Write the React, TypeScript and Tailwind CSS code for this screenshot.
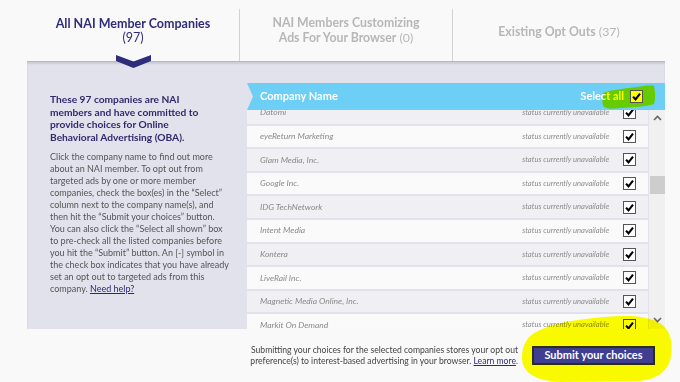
import React from "react";

const rows = [
  "Datomi",
  "eyeReturn Marketing",
  "Glam Media, Inc.",
  "Google Inc.",
  "IDG TechNetwork",
  "Intent Media",
  "Kontera",
  "LiveRail Inc.",
  "Magnetic Media Online, Inc.",
  "Markit On Demand",
];

const bodyLines = [
  "Click the company name to find out more",
  "about an NAI member. To opt out from",
  "targeted ads by one or more member",
  "companies, check the box(es) in the \u201cSelect\u201d",
  "column next to the company name(s), and",
  "then hit the \u201cSubmit your choices\u201d button.",
  "You can also click the \u201cSelect all shown\u201d box",
  "to pre-check all the listed companies before",
  "you hit the \u201cSubmit\u201d button. An [-] symbol in",
  "the check box indicates that you have already",
  "set an opt out to targeted ads from this",
];

function Check({ yellow = false }: { yellow?: boolean }) {
  return (
    <div
      className={`w-[13px] h-[13px] border border-[#555] flex items-center justify-center ${
        yellow ? "bg-[#ffff00]" : "bg-white"
      }`}
    >
      <svg width="11" height="11" viewBox="0 0 11 11">
        <path d="M2 5.6 L4.5 8.3 L9 2.6" fill="none" stroke="#000" strokeWidth="2.1" />
      </svg>
    </div>
  );
}

export default function App() {
  return (
    <div className="w-[680px] h-[382px] bg-[#f9f9f9] relative overflow-hidden font-[Lato,sans-serif]">
      {/* Tabs */}
      <div className="ml-[27px] w-[638px] h-[62px] flex border-b border-[#b8b8b8] relative">
        <div className="w-[212px] flex flex-col items-center pt-[17px] text-[12.5px] leading-[14px] text-[#2f2c7a]">
          <span className="font-bold">All NAI Member Companies</span>
          <span>(97)</span>
        </div>
        <div className="w-px bg-[#d2d2d2] mt-[9px]" />
        <div className="w-[212px] flex flex-col items-center pt-[15px] text-[12.3px] leading-[15px] text-[#b7b7b7]">
          <span className="font-bold">NAI Members Customizing</span>
          <span>
            <span className="font-bold">Ads For Your Browser</span> (0)
          </span>
        </div>
        <div className="w-px bg-[#d2d2d2] mt-[9px]" />
        <div className="flex-1 flex flex-col items-center pt-[25px] text-[12.3px] leading-[14px] text-[#b7b7b7]">
          <span>
            <span className="font-bold">Existing Opt Outs</span> (37)
          </span>
        </div>
      </div>

      {/* Main panel */}
      <div className="ml-[27px] w-[638px] h-[267px] bg-[#e2e2ed] flex shadow-[inset_0_2px_2px_rgba(0,0,0,0.10)]">
        <div className="w-[220px] shrink-0 pl-[23px] pt-[31px]">
          <div className="text-[10.2px] leading-[12.5px] font-bold text-[#2f2a6b] whitespace-nowrap">
            These 97 companies are NAI
            <br />
            members and have committed to
            <br />
            provide choices for Online
            <br />
            Behavioral Advertising (OBA).
          </div>
          <div className="mt-[8px] text-[9px] leading-[12px] text-[#555] whitespace-nowrap">
            {bodyLines.map((l) => (
              <div key={l}>{l}</div>
            ))}
            <div>
              company. <span className="text-[#2b2a78] underline">Need help?</span>
            </div>
          </div>
        </div>

        <div className="w-[418px] pt-[21px] flex flex-col">
          {/* header */}
          <div className="h-[27px] bg-[#6dcff5] relative flex items-center pl-[13px] pr-[22px] z-10">
            <svg className="absolute left-0 top-0" width="7" height="27" viewBox="0 0 7 27">
              <path d="M0 0 L6 13.5 L0 27 Z" fill="#e2e2ed" />
            </svg>
            <svg className="absolute left-[355px] top-[1px]" width="54" height="26" viewBox="0 0 54 26">
              <path
                d="M1 9 C8 6 20 5 34 3 C42 2 48 1 52 2 C53 8 54 14 52 20 C44 23 30 23 18 24 C10 25 4 25 1 22 C0 17 0 12 1 9 Z"
                fill="#66cc00"
              />
            </svg>
            <span className="relative text-white font-bold text-[11px]">Company Name</span>
            <span className="relative ml-auto text-[11px] font-bold text-white mr-[6px]">
              Selec<span className="text-[#ffff00]">t all</span>
            </span>
            <div className="relative">
              <Check yellow />
            </div>
          </div>
          {/* body */}
          <div className="h-[219px] flex gap-[1px]">
            <div className="w-[402px] overflow-hidden">
              <div className="-mt-[8px] flex flex-col gap-[2px]">
                {rows.map((r, i) => (
                  <div
                    key={r}
                    className={`h-[21.6px] shrink-0 flex items-center pl-[13px] pr-[12px] ${
                      i % 2 === 0 ? "bg-[#efeff4]" : "bg-[#fafafa]"
                    }`}
                  >
                    <span className="italic text-[8.5px] text-[#8a8a8a]">{r}</span>
                    <span className="ml-auto italic text-[7.6px] text-[#8d8d8d] mr-[14px]">
                      status currently unavailable
                    </span>
                    <Check />
                  </div>
                ))}
              </div>
            </div>
            <div className="w-[16px] bg-[#f0f0f0] relative flex flex-col items-center">
              <svg className="mt-[5px]" width="9" height="6" viewBox="0 0 9 6">
                <path d="M1 5 L4.5 1.5 L8 5" fill="none" stroke="#666" strokeWidth="1.6" />
              </svg>
              <div className="mt-[55px] w-[15px] h-[18px] bg-[#cdcdcd]" />
              <svg className="mt-auto mb-[6px]" width="9" height="6" viewBox="0 0 9 6">
                <path d="M1 1 L4.5 4.5 L8 1" fill="none" stroke="#666" strokeWidth="1.6" />
              </svg>
            </div>
          </div>
        </div>
      </div>

      {/* Bottom */}
      <div className="h-[53px] flex items-center justify-end pr-[25px] gap-[14px]">
        <div className="text-right text-[8.6px] leading-[11px] text-[#444] whitespace-nowrap">
          Submitting your choices for the selected companies stores your opt out
          <br />
          preference(s) to interest-based advertising in your browser.{" "}
          <span className="underline text-[#2b2a78]">Learn more</span>.
        </div>
        <div className="relative z-10 w-[123px] h-[19px] bg-[#403e90] border-2 border-[#2d2d14] flex items-center justify-center text-white font-bold text-[11px]">
          Submit your choices
        </div>
      </div>

      {/* Tab chevron */}
      <svg className="absolute left-[116px] top-[55px]" width="36" height="14" viewBox="0 0 36 14">
        <path d="M0 0 L17.5 6.5 L35 0 L35 6 L17.5 13 L0 6 Z" fill="#2e2d7c" />
      </svg>

      {/* Yellow highlight */}
      <svg
        className="absolute left-0 top-0 pointer-events-none mix-blend-multiply"
        width="680"
        height="382"
        viewBox="0 0 680 382"
      >
        <path
          d="M527 340 C535 326 575 318 620 316 C650 315 668 322 671 340 C674 360 668 378 640 381 L560 382 C535 381 522 372 522 358 C522 350 524 344 527 340 Z"
          fill="#ffff00"
        />
      </svg>
    </div>
  );
}
